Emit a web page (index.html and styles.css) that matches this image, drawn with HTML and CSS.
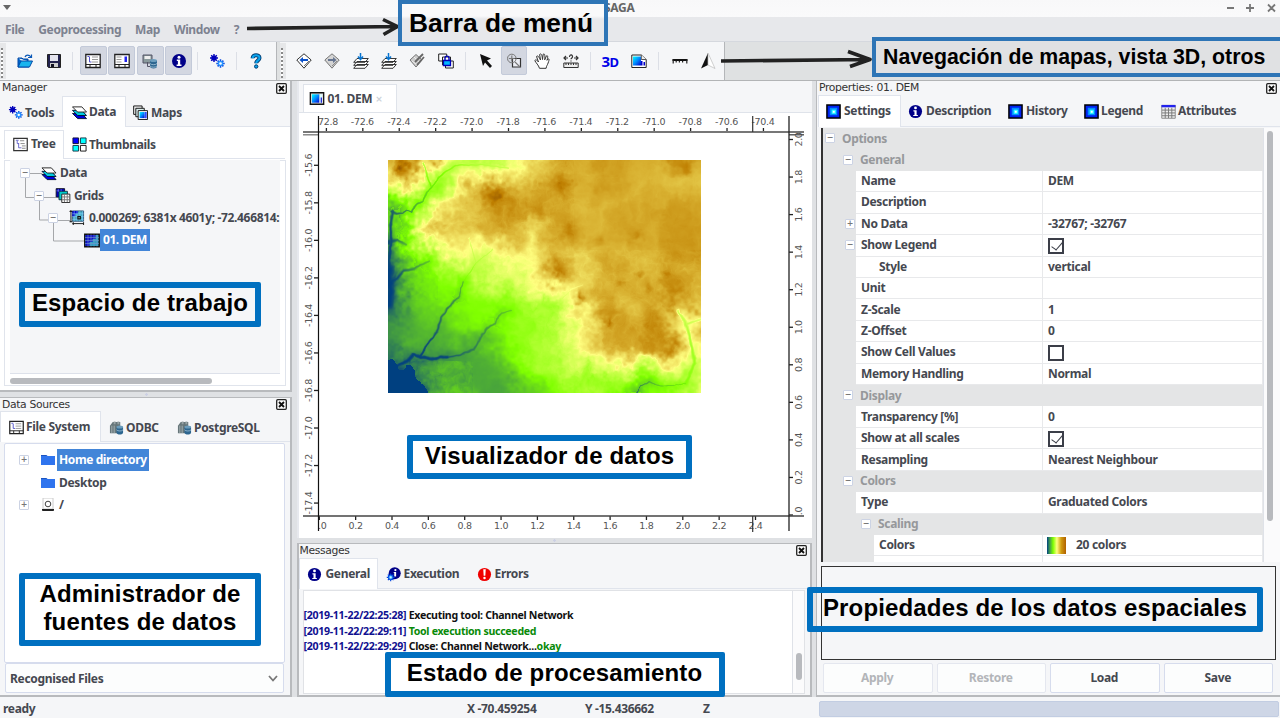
FILE: index.html
```html
<!DOCTYPE html>
<html lang="en">
<head>
<meta charset="utf-8">
<title>SAGA</title>
<link rel="stylesheet" href="styles.css">
</head>
<body>
<svg class="defs" width="0" height="0">
  <defs>
    <linearGradient id="gMap" x1="0" y1="0" x2="1" y2="1"><stop offset="0" stop-color="#0ff"/><stop offset=".5" stop-color="#08f"/><stop offset="1" stop-color="#00c"/></linearGradient>
    <symbol id="i-open" viewBox="0 0 16 16"><path d="M1 5h4l1 1h5v2M1 5v9h11" fill="#06c" stroke="#0048a8"/><path d="M1 14 4 8h11.500L12.500 14z" fill="#19b4ee" stroke="#0048a8"/><path d="M8 4c1-2.500 4-2.500 6 0M14.500 1.500v3H11" fill="none" stroke="#0a58b8" stroke-width="1.200"/></symbol>
    <symbol id="i-save" viewBox="0 0 16 16"><path d="M1.500 1.500h13v13h-12l-1-1z" fill="#22224e" stroke="#222"/><path d="M4 2h8v6H4z" fill="#e4e4ee"/><path d="M4 10h8v4H4z" fill="#ccc"/><path d="M5 11h3v3H5z" fill="#112"/></symbol>
    <symbol id="i-tree" viewBox="0 0 16 16"><path d="M.8 1.500h14.400v13H.8z" fill="#fff" stroke="#333" stroke-width="1.300"/><path d="M3 3.500h3M4.500 4v3h2M6 6.500v5h3" stroke="#66c" fill="none"/><path d="M7.500 4H12M8 7h4.500M9.500 9.500h4M9.500 12h4" stroke="#888"/></symbol>
    <symbol id="i-treebar" viewBox="0 0 16 16"><path d="M.8 1.500h14.400v13H.8z" fill="#fff" stroke="#222" stroke-width="1.300"/><path d="M2.500 3.500h2M4.500 4v5h2" stroke="#55c" fill="none"/><path d="M7 4h6M7 6.500h6M7 9h6" stroke="#999"/><path d="M1 11.500h14M5 11.500v3M11 11.500v3" stroke="#222"/></symbol>
    <symbol id="i-props" viewBox="0 0 16 16"><path d="M.8 1.500h14.400v13H.8z" fill="#fff" stroke="#222" stroke-width="1.300"/><path d="M2.500 4h5M2.500 6.500h5M2.500 9h5" stroke="#999"/><path d="M10.500 3.500H13V9h-2.500z" fill="#22e"/><path d="M1 11.500h14M5 11.500v3M11 11.500v3" stroke="#222"/></symbol>
    <symbol id="i-db" viewBox="0 0 16 16"><path d="M1 2h9v8H1z" fill="#8a9a9c" stroke="#556"/><path d="M2.500 3h6v3h-6z" fill="#eee"/><path d="M5.500 9v4.500H9" stroke="#556" fill="none"/><path d="M8 7.500v6c0 2.600 7 2.600 7 0v-6z" fill="#2d6690"/><ellipse cx="11.500" cy="7.500" rx="3.500" ry="1.600" fill="#6b9dbd"/><path d="M8 10.500c1 1.600 6 1.600 7 0M8 13c1 1.600 6 1.600 7 0" stroke="#a8c8dc" fill="none" stroke-width=".8"/></symbol>
    <symbol id="i-odbc" viewBox="0 0 16 16"><path d="M1 6 4 2h8v9l-2 3H1z" fill="#66767a"/><path d="M5 1.500h2v3H5zM9 1.500h2v3H9z" fill="#99a4a6"/><path d="M3 6v8M5.500 6v8" stroke="#a6b2b4"/><path d="M8 7.500v6c0 2.600 7 2.600 7 0v-6z" fill="#2d6690"/><ellipse cx="11.500" cy="7.500" rx="3.500" ry="1.600" fill="#6b9dbd"/><path d="M8 10.500c1 1.600 6 1.600 7 0" stroke="#a8c8dc" fill="none" stroke-width=".8"/></symbol>
    <symbol id="i-info" viewBox="0 0 16 16"><circle cx="8" cy="8" r="7" fill="#000088"/><circle cx="8" cy="4.200" r="1.500" fill="#fff"/><path d="M5.800 6.600h3.400v5h1.300v1.300H5.600v-1.300h1.300V7.900H5.800z" fill="#fff"/></symbol>
    <symbol id="i-error" viewBox="0 0 16 16"><circle cx="8" cy="8" r="7" fill="#f00000"/><path d="M6.700 2.500h2.600L8.900 9.200H7.100z" fill="#fff"/><circle cx="8" cy="11.800" r="1.300" fill="#fff"/></symbol>
    <symbol id="i-exec" viewBox="0 0 16 16"><circle cx="9.300" cy="6.700" r="6.400" fill="#000088"/><circle cx="10" cy="3.300" r="1.200" fill="#fff"/><path d="M8.600 5.200h2.200v5H8.800V6.300h-1z" fill="#fff"/><path d="M5 6.800v8.400M.8 11h8.400M2 8l6 6M8 8l-6 6" stroke="#04d" stroke-width="1.200"/><circle cx="5" cy="11" r="2.600" fill="#3a9cff" stroke="#04d"/><circle cx="5" cy="11" r="1.200" fill="#bff"/></symbol>
    <symbol id="i-gears" viewBox="0 0 16 16"><path d="M5 1v8M1 5h8M2.200 2.200l5.600 5.600M7.800 2.200 2.200 7.800" stroke="#00b" stroke-width="1.400"/><circle cx="5" cy="5" r="2.600" fill="#00b"/><path d="M11.500 6.300v8.400M7.300 10.500h8.400M8.600 7.600l5.800 5.800M14.400 7.600l-5.800 5.800" stroke="#0a4ce0" stroke-width="1.500"/><circle cx="11.500" cy="10.500" r="2.800" fill="#2694ff"/><circle cx="11.500" cy="10.500" r="1.300" fill="#fff"/></symbol>
    <symbol id="i-help" viewBox="0 0 16 16"><path d="M4.600 5.200C4.600 1.200 11.600 1.400 11.500 5c0 2.400-3.300 2.300-3.300 5.200" fill="none" stroke="#003a70" stroke-width="4"/><path d="M4.600 5.200C4.600 1.200 11.600 1.400 11.500 5c0 2.400-3.300 2.300-3.300 5.200" fill="none" stroke="#0aa4ee" stroke-width="2.200"/><circle cx="8.200" cy="13.500" r="1.700" fill="#0aa4ee" stroke="#003a70"/></symbol>
    <symbol id="i-prev" viewBox="0 0 16 16"><path d="M8 .8 15.200 7 8 15.200.8 7z" fill="#fff" stroke="#333"/><path d="M8 13l5-5" stroke="#777"/><path d="M3.500 7 7 4v2h5v2H7v2z" fill="#0a50c8"/></symbol>
    <symbol id="i-next" viewBox="0 0 16 16"><path d="M8 .8 15.200 7 8 15.200.8 7z" fill="#d4d4d4" stroke="#777"/><path d="M8 13l5-5" stroke="#888"/><path d="M12.500 7 9 4v2H4v2h5v2z" fill="#667590"/></symbol>
    <symbol id="i-layers" viewBox="0 0 16 16"><path d="M.7 15.300 4 11.500h11.300L12 15.300zM.7 12.300 4 8.500h11.300L12 12.300zM.7 9.300 4 5.500h11.300L12 9.300z" fill="#fff" stroke="#222" stroke-width=".9"/><path d="M7.500 0v5M5 3.500l2.500 3 2.500-3" stroke="#0874d0" stroke-width="1.500" fill="none"/></symbol>
    <symbol id="i-draw" viewBox="0 0 16 16"><path d="M1 7 7 1.500 13 7 7 14z" fill="#ccc" stroke="#777"/><path d="M3 8l5 4M5 4l5 5" stroke="#eee"/><path d="M6 9 14 1M8 12 15 4" stroke="#666" stroke-width="1.800"/></symbol>
    <symbol id="i-lock" viewBox="0 0 16 16"><path d="M.7 1h8v7h-8z" fill="#fff" stroke="#222"/><path d="M4.500 4h8v8h-8zM7.500 8h7.800v7H7.500z" fill="#fff" stroke="#222"/><path d="M5.500 7.500h7v5h-7z" fill="#00b8ff" stroke="#00b" stroke-width="1.300"/><path d="M7 7V5c0-2.500 4-2.500 4 0v2" stroke="#00b" stroke-width="1.400" fill="none"/></symbol>
    <symbol id="i-cursor" viewBox="0 0 16 16"><path d="M2 1 13 5.500 9 7.500 14 13l-2 2-5-5.500L5 13z" fill="#111"/></symbol>
    <symbol id="i-zoom" viewBox="0 0 16 16"><path d="M6.500 5.500h8v8.500h-8z" fill="#eceef4" stroke="#333" stroke-width="1.200"/><circle cx="5.800" cy="5.500" r="4.300" fill="none" stroke="#777"/><path d="M5.800 2.500v6M2.800 5.500h6M9 9l5 5" stroke="#777" stroke-width="1.100"/></symbol>
    <symbol id="i-hand" viewBox="0 0 16 16"><path d="M5.500 15.300C4.500 12 2 10 .8 7.500 2 6 3.800 8 4.500 9L2.500 3.500C3.500 2 4.800 3.500 6.500 7L5.600 1.500C7 .2 8 1 8.500 6.500L9.200 1.200c1.300-.8 2 .3 1.500 5.600l1.800-4c1.500-.4 1.500.8.5 4.500l1.300-1.500c1.200 0 .8 1.500-.2 4.200-.6 2-1.700 2.800-2 5.300z" fill="#fff" stroke="#333"/></symbol>
    <symbol id="i-measure" viewBox="0 0 16 16"><path d="M.8 10h14.400v4.500H.8zM3 10v2M5.500 10v2M8 10v2M10.500 10v2M13 10v2" fill="#eee" stroke="#333"/><path d="M5 5H1M3 3 1 5l2 2M11 5h4M13 3l2 2-2 2M6.500 4c0-3 3.500-2.500 3 0-.2 1-1.500 1-1.500 2.300M8 7.500v1" fill="none" stroke="#333" stroke-width="1.200"/></symbol>
    <symbol id="i-page" viewBox="0 0 16 16"><path d="M.8 2h9.500L15.200 6.500v8H.8z" fill="#fff" stroke="#222"/><path d="M2 3.500h8v9H2z" fill="url(#gMap)"/><path d="M10 8h1.500v4.500H10zM12.500 9H14v3.500h-1.500z" fill="#00c"/><path d="M10.300 2v4.500h5" fill="#eee" stroke="#555"/></symbol>
    <symbol id="i-scale" viewBox="0 0 16 16"><path d="M.5 6h15v2H.5z" fill="#111"/><path d="M1.200 6.500v4M4.200 8v1.500M7.400 8v1.500M10.600 8v1.500M14.800 6.500v4" stroke="#222" stroke-width="1.200"/></symbol>
    <symbol id="i-north" viewBox="0 0 16 16"><path d="M8 0v12L1 15.500z" fill="#111"/><path d="M8 0v12l7 3.500z" fill="#fff" stroke="#bbb" stroke-width=".7"/></symbol>
    <symbol id="i-data" viewBox="0 0 16 16"><path d="M.5 9h10l5 5.500H6z" fill="#00d" stroke="#013"/><path d="M.5 5.700h10l5 5.500H6z" fill="#0cd" stroke="#013"/><path d="M.5 2h10l5 5.500H6z" fill="#fff" stroke="#222"/></symbol>
    <symbol id="i-maps" viewBox="0 0 16 16"><path d="M.7 1h9v9h-9z" fill="#eee" stroke="#111"/><path d="M3 3.500h9v9H3z" fill="#dee" stroke="#111"/><path d="M5.500 6h10v9.500h-10z" fill="#fff" stroke="#111"/><path d="M7 7.500h5.500V14H7z" fill="url(#gMap)"/><path d="M13 7.500h1.500V14H13z" fill="#02f"/></symbol>
    <symbol id="i-map" viewBox="0 0 16 14"><path d="M.8.800h14.400v12.400H.8z" fill="#ddd" stroke="#111" stroke-width="1.400"/><path d="M2.500 2.500h8v9h-8z" fill="url(#gMap)"/><path d="M11 2.500h2.500v9H11z" fill="#dff"/><path d="M12 6h1.200v5.500H12z" fill="#00c"/></symbol>
    <symbol id="i-thumbs" viewBox="0 0 16 16"><path d="M1 1h6v6H1z" fill="#00f" stroke="#113"/><path d="M9 1h6v6H9zM1 9h6v6H1z" fill="#0ff" stroke="#134"/><path d="M9 9h6v6H9z" fill="#fff" stroke="#111"/></symbol>
    <symbol id="i-grids" viewBox="0 0 16 16"><path d="M.7.700h9v9h-9z" fill="#0000b8" stroke="#112"/><path d="M3.700 3.500h9v9h-9z" fill="#0cc" stroke="#134"/><path d="M6.700 6.500h8.600v9H6.700z" fill="#fff" stroke="#222"/><path d="M9.500 7v8M12.500 7v8M7 9.500h8M7 12.500h8" stroke="#777"/><path d="M3 1v3M6 1v2.500M1 3h3" stroke="#89f" stroke-width=".6"/></symbol>
    <symbol id="i-gridsys" viewBox="0 0 16 16"><path d="M3 1h12v11H3z" fill="#46acc0" stroke="#357"/><path d="M3 1h6v3H6v3H3z" fill="#0000c8"/><path d="M5 1v11M8 1v11M11 1v11M14 1v11M3 4h12M3 7h12M3 10h12" stroke="#8cf" stroke-width=".6"/><path d="M9 7h2.500v2.500H9z" fill="#bff" stroke="#111" stroke-width="1.300"/><path d="M1.500 0v13M0 1.500h3M0 12.500h3M3 14.500h12M4 13v3M15 13v3" stroke="#111"/></symbol>
    <symbol id="i-grid" viewBox="0 0 16 14"><path d="M.8.800h14.400v12.400H.8z" fill="#2fa0c4" stroke="#111" stroke-width="1.500"/><path d="M1.500 1.500h10v4h-3v3h-3v4h-4z" fill="#1010c8"/><path d="M4 1v12M7 1v12M10 1v12M13 1v12M1 4h14M1 7h14M1 10h14" stroke="#79c" stroke-width=".6"/></symbol>
    <symbol id="i-sq" viewBox="0 0 16 16"><path d="M1 1h14v14H1z" fill="#0022f0" stroke="#000" stroke-width="1.600"/><path d="M4 4h8v8H4z" fill="#0090ff"/><path d="M6 6h4.500v4.500H6z" fill="#3ff"/><path d="M7.300 7.300h2v2h-2z" fill="#fff"/></symbol>
    <symbol id="i-table" viewBox="0 0 16 16"><path d="M.8 1.500h14.400v13.700H.8z" fill="#eee" stroke="#888"/><path d="M1 6.500h14M1 9.500h14M1 12.500h14M4.500 4v11M8 4v11M11.500 4v11" stroke="#777"/><path d="M.5 1h15v2.500H.5z" fill="#22e"/></symbol>
    <symbol id="i-folder" viewBox="0 0 14 12"><path d="M0 1h5l1.500 1H14v9H0z" fill="#2f74ee"/><path d="M0 1h5l1.500 1H0z" fill="#1c54c0"/></symbol>
    <symbol id="i-disk" viewBox="0 0 12 14"><path d="M1 0h10v11H1z" fill="#fff" stroke="#ccc"/><circle cx="6" cy="6" r="2.800" fill="none" stroke="#444"/><path d="M.5 11v1.500h11V11" fill="#222" stroke="#222"/></symbol>
    <symbol id="i-x" viewBox="0 0 11 11"><rect x=".7" y=".7" width="9.600" height="9.600" rx="1" fill="#fff" stroke="#222" stroke-width="1.300"/><path d="M3 3l5 5M8 3l-5 5" stroke="#111" stroke-width="1.900"/></symbol>
  </defs>
</svg>

<div class="app">
  <header class="titlebar">
    <svg class="wm-menu" viewBox="0 0 8 5"><path d="M0 0h8L4 5z" fill="#666"/></svg>
    <span class="app-name">SAGA</span>
    <svg class="wm" viewBox="0 0 50 10"><path d="M1 5h7M20 5h8M24 1v8M42 1.500l7 7M49 1.500l-7 7" stroke="#777" stroke-width="1.800"/></svg>
  </header>
  <nav class="menubar"><span>File</span><span>Geoprocessing</span><span>Map</span><span>Window</span><span>?</span></nav>

  <div class="toolbars">
    <div class="toolbar tb-main">
      <i class="grip"></i>
      <b class="tool"><svg><use href="#i-open"/></svg></b><b class="tool"><svg><use href="#i-save"/></svg></b>
      <i class="sep sep-a"></i>
      <b class="tool on"><svg><use href="#i-treebar"/></svg></b><b class="tool on"><svg><use href="#i-props"/></svg></b><b class="tool on"><svg><use href="#i-db"/></svg></b><b class="tool on"><svg><use href="#i-info"/></svg></b>
      <i class="sep sep-b"></i>
      <b class="tool"><svg><use href="#i-gears"/></svg></b>
      <i class="sep sep-b"></i>
      <b class="tool"><svg><use href="#i-help"/></svg></b>
    </div>
    <div class="toolbar tb-map">
      <i class="grip"></i>
      <b class="tool"><svg><use href="#i-prev"/></svg></b><b class="tool"><svg><use href="#i-next"/></svg></b><b class="tool"><svg><use href="#i-layers"/></svg></b><b class="tool"><svg><use href="#i-layers"/></svg></b><b class="tool"><svg><use href="#i-draw"/></svg></b><b class="tool"><svg><use href="#i-lock"/></svg></b>
      <i class="sep sep-c"></i>
      <b class="tool"><svg><use href="#i-cursor"/></svg></b><b class="tool on"><svg><use href="#i-zoom"/></svg></b><b class="tool"><svg><use href="#i-hand"/></svg></b><b class="tool"><svg><use href="#i-measure"/></svg></b>
      <i class="sep sep-c"></i>
      <b class="tool three-d">3<small>D</small></b><b class="tool"><svg><use href="#i-page"/></svg></b>
      <i class="sep sep-c"></i>
      <b class="tool"><svg><use href="#i-scale"/></svg></b><b class="tool"><svg><use href="#i-north"/></svg></b>
    </div>
  </div>

  <main class="workspace">
    <div class="col col-left">
      <section class="panel manager">
        <div class="caption"><span>Manager</span><svg class="close"><use href="#i-x"/></svg></div>
        <div class="tabs tabs-manager">
          <div class="tab"><svg><use href="#i-gears"/></svg><span>Tools</span></div>
          <div class="tab active"><svg><use href="#i-data"/></svg><span>Data</span></div>
          <div class="tab"><svg><use href="#i-maps"/></svg><span>Maps</span></div>
        </div>
        <div class="subtabs">
          <div class="tab active"><svg><use href="#i-tree"/></svg><span>Tree</span></div>
          <div class="tab"><svg><use href="#i-thumbs"/></svg><span>Thumbnails</span></div>
        </div>
        <div class="tree-frame">
          <div class="tree">
            <svg class="tree-lines" viewBox="0 0 90 90"><path d="M15.500 17v20.500H30M20 13.500h12M29.500 39v21H44M34 37.500h12M43.500 61v20H75M48 60.500h12" stroke="#a5a7aa" fill="none"/></svg>
            <div class="node lvl0"><i class="exp">−</i><svg><use href="#i-data"/></svg><span>Data</span></div>
            <div class="node lvl1"><i class="exp">−</i><svg><use href="#i-grids"/></svg><span>Grids</span></div>
            <div class="node lvl2"><i class="exp">−</i><svg><use href="#i-gridsys"/></svg><span class="grid-name">0.000269; 6381x 4601y; -72.466814:</span></div>
            <div class="node lvl3"><svg><use href="#i-grid"/></svg><span class="sel">01. DEM</span></div>
          </div>
          <div class="hscroll"><i></i></div>
        </div>
      </section>
      <i class="sash-h"></i>
      <section class="panel sources">
        <div class="caption"><span>Data Sources</span><svg class="close"><use href="#i-x"/></svg></div>
        <div class="tabs tabs-sources">
          <div class="tab active"><svg><use href="#i-treebar"/></svg><span>File System</span></div>
          <div class="tab"><svg><use href="#i-odbc"/></svg><span>ODBC</span></div>
          <div class="tab"><svg><use href="#i-odbc"/></svg><span>PostgreSQL</span></div>
        </div>
        <div class="files">
          <div class="file"><i class="exp">+</i><svg class="ic-folder"><use href="#i-folder"/></svg><span class="sel">Home directory</span></div>
          <div class="file"><i class="exp none"></i><svg class="ic-folder"><use href="#i-folder"/></svg><span>Desktop</span></div>
          <div class="file"><i class="exp">+</i><svg class="ic-folder disk"><use href="#i-disk"/></svg><span>/</span></div>
        </div>
        <div class="filter"><span>Recognised Files</span><svg viewBox="0 0 10 7"><path d="M1 1l4 4.500L9 1" fill="none" stroke="#777" stroke-width="1.800"/></svg></div>
      </section>
    </div>

    <div class="col col-center">
      <section class="mapview">
        <div class="doc-tabs"><div class="doc-tab"><svg><use href="#i-map"/></svg><span>01. DEM</span><small>×</small></div></div>
        <div class="map-area">
          <svg id="rulers" width="508" height="425" viewBox="301 113 508 425"></svg>
          <canvas id="dem" width="313" height="233"></canvas>
        </div>
      </section>
      <i class="sash-h"></i>
      <section class="panel messages">
        <div class="caption"><span>Messages</span><svg class="close"><use href="#i-x"/></svg></div>
        <div class="tabs tabs-messages">
          <div class="tab active"><svg><use href="#i-info"/></svg><span>General</span></div>
          <div class="tab"><svg><use href="#i-exec"/></svg><span>Execution</span></div>
          <div class="tab"><svg><use href="#i-error"/></svg><span>Errors</span></div>
        </div>
        <div class="log-frame">
          <div class="log">
            <p><em>[2019-11-22/22:25:28]</em> Executing tool: Channel Network</p>
            <p><em>[2019-11-22/22:29:11]</em> <q>Tool execution succeeded</q></p>
            <p><em>[2019-11-22/22:29:29]</em> Close: Channel Network...<q>okay</q></p>
          </div>
          <div class="vscroll"><i></i></div>
        </div>
      </section>
    </div>

    <section class="panel properties">
      <div class="caption"><span>Properties: 01. DEM</span><svg class="close"><use href="#i-x"/></svg></div>
      <div class="tabs tabs-props">
        <div class="tab active"><svg><use href="#i-sq"/></svg><span>Settings</span></div>
        <div class="tab"><svg><use href="#i-info"/></svg><span>Description</span></div>
        <div class="tab"><svg><use href="#i-sq"/></svg><span>History</span></div>
        <div class="tab"><svg><use href="#i-sq"/></svg><span>Legend</span></div>
        <div class="tab"><svg><use href="#i-table"/></svg><span>Attributes</span></div>
      </div>
      <div class="grid-frame">
        <div class="pgrid">
          <div class="cat c0"><i class="exp">−</i>Options</div>
          <div class="cat c1"><i class="exp">−</i>General</div>
          <div class="row"><i class="m"></i><span>Name</span><span>DEM</span></div>
          <div class="row"><i class="m"></i><span>Description</span><span></span></div>
          <div class="row"><i class="m"><i class="exp">+</i></i><span>No Data</span><span>-32767; -32767</span></div>
          <div class="row"><i class="m"><i class="exp">−</i></i><span>Show Legend</span><span><i class="chk yes"></i></span></div>
          <div class="row"><i class="m"></i><span class="sub">Style</span><span>vertical</span></div>
          <div class="row"><i class="m"></i><span>Unit</span><span></span></div>
          <div class="row"><i class="m"></i><span>Z-Scale</span><span>1</span></div>
          <div class="row"><i class="m"></i><span>Z-Offset</span><span>0</span></div>
          <div class="row"><i class="m"></i><span>Show Cell Values</span><span><i class="chk"></i></span></div>
          <div class="row"><i class="m"></i><span>Memory Handling</span><span>Normal</span></div>
          <div class="cat c1"><i class="exp">−</i>Display</div>
          <div class="row"><i class="m"></i><span>Transparency [%]</span><span>0</span></div>
          <div class="row"><i class="m"></i><span>Show at all scales</span><span><i class="chk yes"></i></span></div>
          <div class="row"><i class="m"></i><span>Resampling</span><span>Nearest Neighbour</span></div>
          <div class="cat c1"><i class="exp">−</i>Colors</div>
          <div class="row"><i class="m"></i><span>Type</span><span>Graduated Colors</span></div>
          <div class="cat c2"><i class="exp">−</i>Scaling</div>
          <div class="row deep"><i class="m"></i><span>Colors</span><span><i class="ramp"></i>20 colors</span></div>
          <div class="row deep"><i class="m"></i><span></span><span></span></div>
        </div>
        <div class="vscroll"><i></i></div>
      </div>
      <div class="help-box"></div>
      <div class="buttons"><button disabled>Apply</button><button disabled>Restore</button><button>Load</button><button>Save</button></div>
    </section>
  </main>

  <footer class="status"><span class="s-ready">ready</span><span class="s-x">X -70.459254</span><span class="s-y">Y -15.436662</span><span class="s-z">Z</span><i class="progress"></i></footer>
</div>

<svg class="arrows" width="1280" height="120"><path d="M247 28.500 397 26.500M383 19.500l14.500 7-14 8M721 61l148-1.500M848 51.500l22 8-20 7" fill="none" stroke="#222" stroke-width="3.600" stroke-linejoin="round"/></svg>
<div class="note thin n-menu">Barra de menú</div>
<div class="note thin n-nav">Navegación de mapas, vista 3D, otros</div>
<div class="note n-work">Espacio de trabajo</div>
<div class="note n-admin">Administrador de<br>fuentes de datos</div>
<div class="note n-view">Visualizador de datos</div>
<div class="note n-state">Estado de procesamiento</div>
<div class="note n-props">Propiedades de los datos espaciales</div>
<script src="map.js"></script>
</body>
</html>
```
FILE: styles.css
```css
* { box-sizing: border-box; }
body { margin: 0; width: 1280px; height: 720px; overflow: hidden; position: relative; background: #fff; color: #454850; font: bold 12px/16px "Noto Sans", sans-serif; letter-spacing: -0.32px; }
i { font-style: normal; display: block; }
p { margin: 0; }
svg { display: block; flex: none; }
.defs { position: absolute; }
.app { height: 718px; display: flex; flex-direction: column; background: #dfe1e4; }

.titlebar { height: 17px; background: linear-gradient(#f8f8f9, #fafafb); display: flex; align-items: center; padding: 0 0 2px 3px; color: #666; }
.wm-menu { width: 8px; height: 5px; }
.app-name { margin-left: 593px; flex: 1; }
.wm { width: 50px; height: 10px; margin-right: 4px; }
.menubar { height: 25px; flex: none; background: #e7e8eb; border-bottom: 1px solid #d5d8de; display: flex; gap: 14px; align-items: center; padding-left: 5px; padding-top: 1px; color: #7d8290; letter-spacing: -0.400px; }

.toolbars { height: 39px; flex: none; display: flex; gap: 3px; background: #dfe1e2; border-bottom: 1px solid #b2b4b6; }
.toolbar { display: flex; align-items: center; background: #f5f6f8; border-right: 1px solid #b4b6b9; padding-bottom: 1px; }
.tb-main { width: 277px; }
.tb-map { width: 445px; }
.grip { width: 6px; height: 36px; background: repeating-linear-gradient(#888 0 2px, #fff 2px 4px) 1px 5px / 2px 30px no-repeat #e6e7e9; margin-right: 4px; }
.tool { width: 26.500px; height: 29px; margin: 0 0.900px; border-radius: 2px; display: flex; align-items: center; justify-content: center; }
.tb-main .tool { width: 27px; margin-right: 1.400px; margin-left: 0; }
.tb-main .grip + .tool { margin-left: 1px; margin-right: 2px; }
.tool svg { width: 16px; height: 16px; }
.tool.on { background: #d3d7e1; border: 1px solid #c3cad9; }
.three-d { color: #0000e8; font: bold 15px/16px "Noto Sans", sans-serif; letter-spacing: -0.600px; padding-right: 2px; }
.three-d small { font-size: 13px; margin-top: 2px; }
.sep { width: 1px; height: 18px; background: #dcdfe6; }
.sep-a { margin: 0 6.500px 0 4px; }
.sep-b { margin: 0 5.500px 0 4px; }
.sep-c { margin: 0 6px 0 5px; }
.tb-map .sep-c:first-of-type { margin-right: 7px; }

.workspace { flex: 1; min-height: 0; display: grid; grid-template-columns: 292px 515px 464px; column-gap: 4.500px; }
.col { display: flex; flex-direction: column; min-height: 0; min-width: 0; }
.panel { background: #f5f6f8; border: solid #b8babd; border-width: 0 2px 2px 0; display: flex; flex-direction: column; min-height: 0; min-width: 0; }
.caption { height: 14px; flex: none; display: flex; justify-content: space-between; align-items: center; padding: 0 3px 0 2px; font: 10.800px/14px "DejaVu Sans", sans-serif; letter-spacing: -0.350px; color: #333; }
.close { width: 11px; height: 11px; }
.tabs, .subtabs { display: flex; align-items: flex-end; flex: none; font-size: 12px; }
.tab { display: flex; align-items: center; gap: 2px; border-bottom: 1px solid #e0e4ec; white-space: nowrap; padding-top: 3px; }
.tab svg { width: 15px; height: 15px; }
.tab.active { background: #fff; border: 1px solid #e0e4ec; border-bottom: 0; padding-top: 0; }

.manager { height: 311px; }
.tabs-manager { height: 32px; }
.tabs-manager .tab { height: 31px; padding-left: 8px; width: 62px; }
.tabs-manager .active { width: 64px; padding-left: 9px; }
.tabs-manager .tab:last-child { flex: 1; padding-left: 7px; gap: 3px; }
.subtabs { height: 32px; background: #fff; padding: 3px 5px 0 4px; align-items: stretch; }
.subtabs .tab { padding-left: 8px; padding-top: 1px; flex: 1; border-bottom: 1px solid #dfe3ec; }
.subtabs .active { flex: none; width: 60px; border-bottom: 0; padding: 0 0 2px 8px; gap: 3px; }
.tree-frame { flex: 1; background: #fff; border: 4px solid #fff; border-top-width: 1px; box-shadow: inset 0 0 0 1px #e0e4ec; display: flex; flex-direction: column; min-height: 0; padding: 0 6px 0 6px; }
.tree { flex: 1; background: #f5f6f8; position: relative; overflow: hidden; padding-top: 2px; }
.tree-lines { position: absolute; left: 0; top: 0; width: 90px; height: 90px; }
.node { position: relative; display: flex; align-items: center; height: 22.400px; white-space: nowrap; }
.node svg { width: 16px; height: 15px; margin-left: 11px; }
.node span { padding: 3px 3px; height: 22px; }
.lvl0 { padding-left: 10px; }
.lvl1 { padding-left: 24px; }
.lvl2 { padding-left: 38px; }
.lvl3 { padding-left: 63px; }
.grid-name { margin-left: 1px; letter-spacing: -0.340px; }
.node .sel, .file .sel { background: #4285d8; color: #fff; margin-left: 0; }
.node .sel { letter-spacing: -0.450px; }
.exp { width: 10px; height: 10px; flex: none; background: #fff; border: 1px solid #ccd3e4; border-radius: 1px; font: bold 8px/8px "DejaVu Sans", sans-serif; text-align: center; color: #777; letter-spacing: 0; }
.exp.none { visibility: hidden; }
.hscroll { height: 13px; flex: none; border-top: 1px solid #dde1ea; padding-top: 4px; }
.hscroll i { width: 202px; height: 6px; border-radius: 3px; background: #b8babe; }

.sash-h { height: 5px; flex: none; background: radial-gradient(circle, #ccd0e4 1px, transparent 1.500px) center / 5px 5px no-repeat; }
.sources { flex: 1; border-top: 1px solid #b8babd; }
.sources .caption { height: 13px; }
.tabs-sources { height: 31px; }
.tabs-sources .tab { height: 31px; padding-left: 9px; gap: 2px; width: 68px; }
.tabs-sources .active { width: 101px; padding-left: 8px; }
.tabs-sources .tab:last-child { flex: 1; }
.tabs-sources .tab:nth-child(2) { padding-left: 8px; }
.tabs-sources .tab:last-child { padding-left: 8px; }
.files { flex: 1; margin: 1px 5px 0 4px; background: #fff; border: 1px solid #d6dced; border-radius: 2px; padding: 5px 0 0 14px; }
.file { height: 22.400px; display: flex; align-items: center; }
.ic-folder { width: 14px; height: 12px; margin-left: 12px; }
.ic-folder.disk { height: 14px; }
.file span { padding: 3px; margin-left: 1px; }
.file .sel { margin-left: 2px; padding: 3px 2px; letter-spacing: -0.400px; }
.filter { height: 30px; flex: none; margin: 0 6px 2px 5px; background: #fcfdfd; border: 1px solid #d6dced; border-radius: 2px; display: flex; align-items: center; justify-content: space-between; padding: 0 5px 0 4px; }
.filter span { padding-top: 1px; }
.filter svg { width: 10px; height: 7px; }

.mapview { height: 457px; flex: none; display: flex; flex-direction: column; background: #fff; border-left: 2px solid #e6e8ed; }
.doc-tabs { height: 32px; flex: none; background: #f5f6f8; border-bottom: 1px solid #dfe3ea; padding: 3px 0 0 4px; }
.doc-tab { width: 94px; height: 28px; background: #fff; border: 1px solid #dfe3ea; border-bottom: 0; padding-left: 5px; display: flex; align-items: center; gap: 3px; }
.doc-tab svg { width: 16px; height: 13px; }
.doc-tab small { font: bold 9px "DejaVu Sans", sans-serif; color: #ccd2d8; }
.map-area { position: relative; padding-left: 2px; }
#dem { position: absolute; left: 89px; top: 47px; }
#rulers text { font: 9.500px "DejaVu Sans", sans-serif; fill: #555; text-anchor: middle; letter-spacing: -0.300px; }

.messages { flex: 1; border: 2px solid #b8babd; border-top-width: 1px; }
.messages .caption { height: 13px; padding-right: 3px; padding-left: 1px; }
.tabs-messages { height: 32px; }
.tabs-messages .tab { height: 32px; padding-left: 8px; gap: 3px; width: 91px; }
.tabs-messages .active { width: 79px; padding-left: 7px; gap: 4px; height: 31px; }
.tabs-messages .tab:last-child { flex: 1; }
.log-frame { flex: 1; margin: 1px 5px 1px 4px; background: #fff; border: 1px solid #e0e2e6; display: flex; min-height: 0; }
.log { flex: 1; padding-top: 17px; color: #111; font-size: 10.600px; letter-spacing: -0.300px; line-height: 15.600px; }
.log em { font-style: normal; color: #101090; }
.log q { quotes: none; color: #088a08; }
.vscroll { width: 12px; border-left: 1px solid #dfe2e8; background: #fbfbfc; padding-left: 3px; }
.vscroll i { width: 6px; border-radius: 3px; background: #b8babe; height: 27px; margin-top: 62px; }

.properties { border-width: 0 0 2px 1px; }
.tabs-props { height: 33px; padding-left: 1px; }
.tabs-props .tab { height: 32px; padding-left: 8px; gap: 3px; width: 99px; padding-top: 1px; align-self: flex-start; }
.tabs-props .active { width: 83px; padding: 0 0 1px 7px; }
.tabs-props .tab:nth-child(2) { padding-left: 7px; }
.tabs-props .tab:nth-child(3) { width: 76px; }
.tabs-props .tab:nth-child(4) { width: 77px; gap: 2px; }
.tabs-props .tab:nth-child(5) { flex: 1; gap: 2px; }
.grid-frame { height: 434px; flex: none; display: flex; margin-left: 4px; border-left: 2px solid #333; overflow: hidden; }
.pgrid { flex: 1; background: #e4e5e6; }
.cat { height: 21.430px; display: flex; align-items: center; color: #96989b; }
.cat .exp { margin-right: 7px; margin-top: -1px; }
.c0 { padding-left: 2px; }
.c1 { padding-left: 20px; }
.c2 { padding-left: 38px; }
.row { height: 21.430px; display: grid; grid-template-columns: 33px 187px 1fr; }
.row.deep { grid-template-columns: 51px 169px 1fr; }
.row > span { background: #fff; border-bottom: 1px solid #e8e9eb; border-right: 1px solid #e8e9eb; padding-left: 5px; display: flex; align-items: center; white-space: nowrap; }
.row > .sub { padding-left: 23px; }
.row .m { padding: 5px 0 0 22px; }
.chk { width: 16px; height: 16px; border: 2px solid #3b3e48; position: relative; margin-top: 1px; }
.chk.yes::after { content: ""; position: absolute; left: 4px; top: 0; width: 5px; height: 9px; border: solid #3b3e48; border-width: 0 1.500px 1.500px 0; transform: rotate(35deg) skewX(-6deg); }
.ramp { width: 19px; height: 17px; margin: 0 10px 0 -1px; background: linear-gradient(90deg, #004080, #40a050 15%, #80ff00 32%, #ffff80 52%, #d09a10 75%, #b06000); }
.grid-frame .vscroll { width: 17px; }
.grid-frame .vscroll i { margin-top: 3px; height: 390px; }
.help-box { height: 94px; flex: none; margin: 4px 4px 0 4px; border: 1px solid #333; }
.buttons { display: grid; grid-template-columns: repeat(4, 1fr); gap: 4px; margin: 3px 7px 2px 6px; flex: 1; }
button { font: inherit; letter-spacing: inherit; color: #454850; background: #fcfdfd; border: 1px solid #d6dced; border-radius: 2px; padding: 0 1px 0 0; }
button:disabled { color: #b3b5b9; border-color: #e4e7ef; }

.status { height: 21px; flex: none; background: #f5f6f8; display: grid; grid-template-columns: 464px 118px 118px 115px 1fr; align-items: center; padding-left: 3px; padding-top: 2px; }
.progress { height: 16px; background: #ced6e6; border: 1px solid #c2cde2; border-radius: 2px; margin: 0 1px; }

.arrows { position: absolute; left: 0; top: 0; }
.note { position: absolute; border: 6px solid #0070c0; border-radius: 2px; background: #fff; color: #000; font: bold 24px/28px "Liberation Sans", Arial, sans-serif; letter-spacing: 0.150px; display: flex; align-items: center; justify-content: center; text-align: center; white-space: nowrap; }
.note.thin { border-width: 4px; border-color: #2e75b6; border-radius: 0; letter-spacing: 0; }
.n-menu { left: 398px; top: 0; width: 210px; height: 46px; font-size: 26.300px; background: linear-gradient(#f9f9fa 12px, #e7e8eb 15px); padding-right: 4px; }
.n-nav { left: 872px; top: 37px; width: 412px; height: 40px; font-size: 21.300px; background: #e0e1e3; justify-content: flex-start; padding-left: 7px; }
.n-work { left: 19px; top: 282px; width: 242px; height: 45px; background: #f5f6f8; padding-bottom: 3px; }
.n-admin { left: 19px; top: 573px; width: 242px; height: 73px; padding-bottom: 4px; }
.n-view { left: 407px; top: 435px; width: 285px; height: 44px; padding-bottom: 2px; }
.n-state { left: 385px; top: 652px; width: 340px; height: 45px; padding-bottom: 3px; padding-right: 1px; }
.n-props { left: 807px; top: 587px; width: 456px; height: 45px; background: none; padding-bottom: 3px; }
```
FILE: map.js
```js
// Rulers round the map frame
(function () {
  var s = '', i;
  function line(x1, y1, x2, y2, c, w) {
    s += '<line x1="' + x1 + '" y1="' + y1 + '" x2="' + x2 + '" y2="' + y2 + '" stroke="' + (c || '#222') + '" stroke-width="' + (w || 1.3) + '"/>';
  }
  function text(x, y, t, rot) {
    s += '<text x="' + x + '" y="' + y + '"' + (rot ? ' transform="rotate(-90 ' + x + ' ' + y + ')"' : '') + '>' + t + '</text>';
  }
  for (i = 0; i <= 12; i++) {
    var x = 326.4 + i * 36.42;
    line(x, 128, x, 132);
    text(i ? x - 0.5 : x + 1.5, 125, i ? (-72.8 + i * 0.2).toFixed(1) : '72.8');
    var xb = 319.3 + i * 36.35;
    line(xb, 516, xb, 520);
    text(i ? xb : xb + 3, 529, i ? (i * 0.2).toFixed(1) : '.0');
  }
  for (i = 0; i <= 9; i++) {
    var y = 165.3 + i * 37.53;
    line(314, y, 318, y);
    text(312, y, (-15.6 - i * 0.2).toFixed(1), true);
  }
  for (i = 0; i <= 10; i++) {
    var yr = 139.5 + i * 37.55;
    line(789, yr, 793, yr);
    text(802, i < 10 ? yr : yr - 4, i < 10 ? (2 - i * 0.2).toFixed(1) : '.0', true);
  }
  line(303, 132, 804, 132, '#777', 2);
  line(303, 134.8, 318, 134.8, '#777');
  line(789, 134.8, 804, 134.8, '#444');
  line(303, 516, 804, 516, '#444', 1.3);
  line(318.500, 116, 318.500, 531, '#111', 1.2);
  line(789, 116, 789, 531, '#222', 1.3);
  line(752.700, 116, 752.700, 132, '#333', 1.2);
  line(752.700, 516, 752.700, 532, '#333', 1.2);
  document.getElementById('rulers').innerHTML = s;
})();

// Elevation model: coarse heights, fractal relief and carved valleys
(function () {
  var W = 313, H = 233, cv = document.getElementById('dem'), cx = cv.getContext('2d');
  var G = [
    [80, 92, 76, 58, 54, 62, 75, 84, 84, 89, 85, 84, 89, 82],
    [68, 78, 58, 72, 84, 84, 85, 89, 83, 87, 84, 83, 82, 80],
    [46, 58, 70, 79, 86, 88, 87, 85, 82, 84, 85, 86, 87, 85],
    [36, 66, 78, 79, 80, 83, 77, 85, 84, 84, 87, 86, 88, 87],
    [22, 52, 60, 67, 65, 70, 72, 80, 79, 84, 82, 86, 89, 87],
    [24, 38, 47, 52, 56, 62, 67, 82, 76, 84, 82, 84, 88, 83],
    [16, 34, 41, 46, 47, 49, 56, 58, 73, 87, 83, 84, 89, 84],
    [24, 31, 35, 41, 45, 47, 51, 55, 65, 85, 84, 88, 84, 80],
    [22, 30, 29, 31, 34, 43, 51, 56, 66, 75, 86, 90, 82, 76],
    [8, 18, 25, 28, 30, 34, 46, 53, 57, 59, 59, 58, 62, 62],
    [0, 0, 20, 34, 29, 29, 36, 44, 48, 48, 44, 47, 53, 64]
  ];
  var peaks = [[107, 36, 9, 11], [104, 28, 18, 3], [18, 24, 6, 9], [14, 4, 7, 7], [49, 3, 5, 14], [172, 24, 8, 8], [181, 66, 9, 9], [169, 113, 7, 14], [166, 101, 6, 12], [192, 136, 4, 20],
    [219, 160, 4, 12], [214, 148, 5, 5], [248, 76, 5, 7], [250, 116, 4, 8], [235, 120, 4, 7], [280, 114, 5, 8], [285, 145, 4, 12], [286, 183, 7, 8], [273, 165, 7, 7], [312, 172, 5, 13], [300, 2, 9, 8], [262, 130, 4, 7], [278, 192, 6, 8], [148, 46, 7, 6], [212, 82, 5, 6]];
  var rivers = [
    { p: [[3, 51], [8, 54], [14, 53], [18, 50], [23, 51], [29, 43], [34, 41], [38, 32], [44, 24], [50, 17], [57, 11], [67, 5], [80, 5], [94, 4], [120, 8]], a: 16, b: 58, w: 1.4, e: 12 },
    { p: [[35, 2], [38, 14], [42, 26]], a: 56, b: 42, w: 1.5, e: 8 },
    { p: [[4, 51], [2, 65], [2, 82], [0, 105]], a: 15, b: 4, w: 1.6, e: 7 },
    { p: [[0, 82], [9, 79], [18, 84]], a: 8, b: 32, w: 1.8, e: 9 },
    { p: [[0, 125], [8, 118], [15, 109], [25, 108], [40, 101]], a: 2, b: 34, w: 1.8, e: 9 },
    { p: [[6, 118], [8, 108], [6, 98]], a: 14, b: 34, w: 1.5, e: 7 },
    { p: [[0, 108], [1, 124], [3, 130], [0, 144]], a: 0, b: 0, w: 4, e: 4 },
    { p: [[31, 196], [38, 185], [48, 172], [53, 157], [66, 140], [71, 136], [74, 122]], a: 4, b: 34, w: 1.3, e: 4 },
    { p: [[74, 122], [79, 114], [88, 103], [104, 88]], a: 42, b: 60, w: 1, e: 5 },
    { p: [[8, 206], [20, 200], [25, 194], [31, 197], [40, 198], [58, 197]], a: 0, b: 5, w: 1.6, e: 4 },
    { p: [[58, 197], [72, 195], [85, 189], [93, 176], [98, 168], [107, 163], [114, 153], [123, 150]], a: 14, b: 36, w: 1.2, e: 5 },
    { p: [[88, 102], [84, 90], [80, 78]], a: 56, b: 64, w: 1, e: 7 },
    { p: [[248, 233], [253, 225], [260, 222], [272, 225], [298, 223]], a: 18, b: 42, w: 1, e: 7 },
    { p: [[298, 223], [306, 203], [302, 180], [297, 162], [290, 150]], a: 46, b: 60, w: 2.4, e: 9 },
    { p: [[298, 164], [312, 158]], a: 58, b: 62, w: 2, e: 7 },
    { p: [[172, 139], [182, 130], [194, 125]], a: 60, b: 72, w: 1, e: 5 }
  ];
  function hash(x, y, s) {
    var h = Math.imul(x, 374761393) + Math.imul(y, 668265263) + Math.imul(s, 982451653);
    h = Math.imul(h ^ (h >>> 13), 1274126177);
    return ((h ^ (h >>> 16)) >>> 0) / 4294967295;
  }
  function noise(x, y, s) {
    var a = Math.floor(x), b = Math.floor(y), u = x - a, v = y - b;
    u = u * u * (3 - 2 * u); v = v * v * (3 - 2 * v);
    return (hash(a, b, s) * (1 - u) + hash(a + 1, b, s) * u) * (1 - v) + (hash(a, b + 1, s) * (1 - u) + hash(a + 1, b + 1, s) * u) * v;
  }
  function ridged(x, y, s) {
    var t = 0, a = 1, f = 1 / 26;
    for (var o = 0; o < 5; o++) { t += a * (Math.abs(2 * noise(x * f, y * f, s + o) - 1) - 0.36); a *= 0.62; f *= 1.9; }
    return t;
  }
  function cub(a, b, c, d, t) { return b + 0.5 * t * (c - a + t * (2 * a - 5 * b + 4 * c - d + t * (3 * (b - c) + d - a))); }
  function cell(r, c) { return G[Math.max(0, Math.min(10, r))][Math.max(0, Math.min(13, c))]; }
  function base(x, y) {
    var gx = x / 24, gy = y / 23.3, c = Math.floor(gx), r = Math.floor(gy), q = [];
    for (var k = -1; k < 3; k++) q.push(cub(cell(r + k, c - 1), cell(r + k, c), cell(r + k, c + 1), cell(r + k, c + 2), gx - c));
    return cub(q[0], q[1], q[2], q[3], gy - r);
  }
  var stops = [[0, 0, 64, 128], [12, 20, 84, 112], [26, 66, 154, 66], [45, 128, 255, 0], [67, 255, 255, 128], [84, 216, 176, 48], [95, 190, 126, 0], [112, 115, 56, 0]];
  function color(h) {
    h = Math.max(0, Math.min(111.9, h));
    for (var i = 1; h > stops[i][0]; i++);
    var a = stops[i - 1], b = stops[i], t = (h - a[0]) / (b[0] - a[0]);
    return [a[1] + (b[1] - a[1]) * t, a[2] + (b[2] - a[2]) * t, a[3] + (b[3] - a[3]) * t];
  }
  var im = cx.createImageData(W, H);
  for (var y = 0; y < H; y++) for (var x = 0; x < W; x++) {
    var wx = (noise(x / 11, y / 11, 7) - 0.5) * 14 + (noise(x / 4, y / 4, 9) - 0.5) * 8 + (noise(x / 2, y / 2, 11) - 0.5) * 3;
    var wy = (noise(x / 11, y / 11, 17) - 0.5) * 14 + (noise(x / 4, y / 4, 19) - 0.5) * 8 + (noise(x / 2, y / 2, 21) - 0.5) * 3;
    var h = base(Math.max(0, Math.min(W, x + wx)), Math.max(0, Math.min(H, y + wy)));
    var rough = h > 56 ? 6 : h > 45 ? 1.2 + (h - 45) / 2.3 : 1.2;
    if (h > 78 && x > 185 && y < 90) rough = 3;
    if (y > 200 && x > 20 && x < 85) rough = 9;
    if (x < 50 && y < 140) rough += 3;
    h += ridged(x + wx * 0.4, y + wy * 0.4, 31) * rough;
    peaks.forEach(function (p) {
      var dx = x + wx * 0.45 - p[0], dy = y + wy * 0.45 - p[1];
      h += p[3] * Math.exp(-Math.pow((dx * dx + dy * dy) / (p[2] * p[2]), 0.75));
    });
    rivers.forEach(function (r) {
      var best = 1e9, at = 0, n = r.p.length - 1, jx = x + wx * 0.14, jy = y + wy * 0.14;
      for (var i = 0; i < n; i++) {
        var a = r.p[i], b = r.p[i + 1], ex = b[0] - a[0], ey = b[1] - a[1];
        var t = Math.max(0, Math.min(1, ((jx - a[0]) * ex + (jy - a[1]) * ey) / (ex * ex + ey * ey)));
        var d = Math.hypot(jx - a[0] - ex * t, jy - a[1] - ey * t);
        if (d < best) { best = d; at = (i + t) / n; }
      }
      var floor = r.a + (r.b - r.a) * at;
      if (h > floor) {
        var spread = r.e * (0.5 + 1.1 * noise(x / 3.5, y / 3.5, 43));
        var core = Math.exp(-Math.pow(best / r.w, 2)), side = Math.exp(-Math.pow(best / spread, 1.3)) * 0.5;
        h -= (h - floor) * Math.max(core, side * (h > 45 ? 1 : 0.3));
      }
    });
    var edge = x < 22 ? 200 + x * 0.25 : 205.5 + (x - 22) * 1.5;
    if (x < 50 && y > edge + wy * 0.5 + wx * 0.5) h = 0;
    var c = color(h), o = (y * W + x) * 4;
    im.data[o] = c[0]; im.data[o + 1] = c[1]; im.data[o + 2] = c[2]; im.data[o + 3] = 255;
  }
  cx.putImageData(im, 0, 0);
})();
```
